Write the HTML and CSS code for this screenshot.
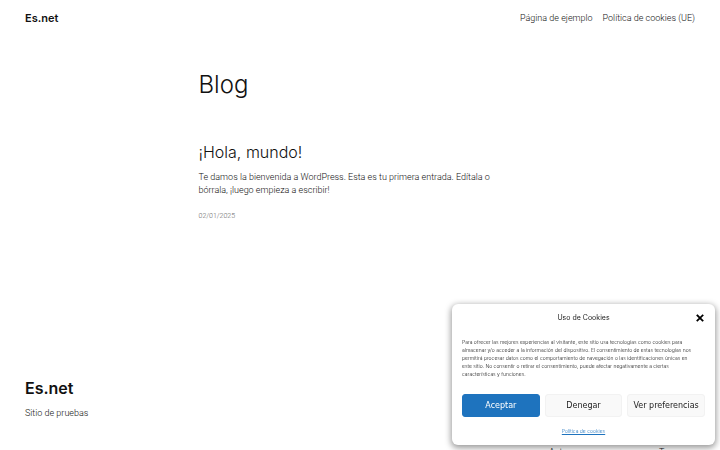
FILE: index.html
```html
<!DOCTYPE html>
<html lang="es">
<head>
<meta charset="utf-8">
<meta name="viewport" content="width=device-width, initial-scale=1">
<title>Es.net</title>
<link rel="stylesheet" href="styles.css">
</head>
<body>
<header class="site-header">
  <a class="site-name" href="#">Es.net</a>
  <nav class="site-nav">
    <a href="#">Página de ejemplo</a>
    <a href="#">Política de cookies (UE)</a>
  </nav>
</header>
<main class="content">
  <h1 class="page-title">Blog</h1>
  <article class="post">
    <h2 class="post-title"><a href="#">¡Hola, mundo!</a></h2>
    <p class="post-text">Te damos la bienvenida a WordPress. Esta es tu primera entrada. Edítala o bórrala, ¡luego empieza a escribir!</p>
    <time class="post-date" datetime="2025-01-02">02/01/2025</time>
  </article>
</main>
<footer class="site-footer">
  <div class="footer-brand">
    <h2 class="footer-title"><a href="#">Es.net</a></h2>
    <p class="tagline">Sitio de pruebas</p>
  </div>
  <nav class="footer-nav">
    <a href="#">Autores</a>
    <a href="#">Temas</a>
  </nav>
</footer>
<section class="cookies" role="dialog" aria-labelledby="cookies-title">
  <div class="cookies-head">
    <h2 class="cookies-title" id="cookies-title">Uso de Cookies</h2>
    <button class="close" type="button" aria-label="Cerrar">
      <svg class="close-icon" viewBox="0 0 8 8" aria-hidden="true"><path d="M1.4 1.4 6.6 6.6M6.6 1.4 1.4 6.6" stroke="currentColor" stroke-width="1.8" stroke-linecap="square"/></svg>
    </button>
  </div>
  <p class="cookies-text">Para ofrecer las mejores experiencias al visitante, este sitio usa tecnologías como cookies para almacenar y/o acceder a la información del dispositivo. El consentimiento de estas tecnologías nos permitirá procesar datos como el comportamiento de navegación o las identificaciones únicas en este sitio. No consentir o retirar el consentimiento, puede afectar negativamente a ciertas características y funciones.</p>
  <div class="cookies-actions">
    <button class="button button-primary" type="button">Aceptar</button>
    <button class="button" type="button">Denegar</button>
    <button class="button" type="button">Ver preferencias</button>
  </div>
  <a class="cookies-link" href="#">Política de cookies</a>
</section>
</body>
</html>
```
FILE: styles.css
```css
* { box-sizing: border-box; }

body {
  margin: 0;
  min-height: 100vh;
  overflow: hidden;
  background: #fff;
  color: #111;
  font: 300 9px/13px Roboto, "Liberation Sans", sans-serif;
}

h1, h2, p { margin: 0; }
a { color: inherit; text-decoration: none; }

.site-header {
  display: flex;
  align-items: center;
  justify-content: space-between;
  padding: 10px 25px;
}
.site-name { font: 600 11px/16px Inter, sans-serif; }
.site-nav { display: flex; gap: 10px; }

.content {
  width: 323px;
  max-width: 90%;
  margin: 0 auto;
  padding-top: 33px;
}
.page-title { font: 300 24px/32px Inter, sans-serif; }
.post { padding-top: 39px; }
.post-title { font: 300 16px/24px Inter, sans-serif; }
.post-text { padding: 7px 24px 11px 0; }
.post-date { display: block; color: #686868; font-size: 7px; line-height: 16px; }

.site-footer {
  display: grid;
  grid-template-columns: 1fr 171px;
  padding: 152px 0 0 25px;
}
.footer-title { font: 600 16px/24px Inter, sans-serif; }
.tagline { padding-top: 7px; }
.footer-nav {
  display: grid;
  grid-template-columns: 110px 1fr;
  align-self: end;
  margin-bottom: -39px;
}

.cookies {
  position: fixed;
  right: 5px;
  bottom: 5px;
  width: 263px;
  padding: 9px 10px 8px;
  border-radius: 6px;
  background: #fff;
  box-shadow: 0 2px 6px 1px rgba(0, 0, 0, .4);
  color: #222;
}
.cookies-head {
  display: grid;
  grid-template-columns: 10px 1fr 10px;
  align-items: center;
}
.cookies-title {
  grid-column: 2;
  font: 400 7px/10px Inter, sans-serif;
  text-align: center;
}
.close { display: flex; padding: 1px; border: 0; background: none; color: #000; }
.close-icon { width: 8px; height: 8px; }
.cookies-text { padding: 15px 10px 16px 0; font: 300 5px/8px Inter, sans-serif; }
.cookies-actions {
  display: grid;
  grid-template-columns: repeat(3, 1fr);
  gap: 5px;
}
.button {
  height: 23px;
  padding: 0;
  border: 1px solid #f2f2f2;
  border-radius: 3px;
  background: #f9f9f9;
  color: #222;
  font: 400 8px/10px "DejaVu Sans", sans-serif;
}
.button-primary { border-color: #1e73be; background: #1e73be; color: #fff; }
.cookies-link {
  display: block;
  padding-top: 9px;
  color: #1e73be;
  font: 300 5px/11px Inter, sans-serif;
  text-align: center;
  text-decoration: underline;
}
```
